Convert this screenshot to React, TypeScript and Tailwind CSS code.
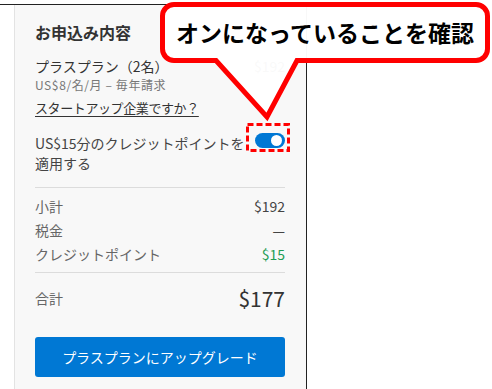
import React from "react";

const font = { fontFamily: '"Noto Sans CJK JP", "Noto Sans", sans-serif' };

function Toggle() {
  return (
    <span className="relative flex h-[15px] w-[30px] shrink-0 items-center rounded-full bg-[#0078d4]">
      <span className="absolute right-[3px] h-[11px] w-[11px] rounded-full bg-white" />
    </span>
  );
}

function Row({ label, value, valueClass }: { label: string; value: string; valueClass?: string }) {
  return (
    <div className="flex items-center justify-between text-[14px] leading-[24px]">
      <span className="text-[#666]">{label}</span>
      <span className={valueClass ?? "text-[#444]"}>{value}</span>
    </div>
  );
}

export default function App() {
  return (
    <div className="relative h-[389px] w-[492px] overflow-hidden bg-white" style={font}>
      {/* screenshot frame */}
      <div className="mt-[4px] flex h-[385px] w-[307px] border-t border-r border-[#222]">
        <div className="w-[14px] shrink-0 bg-white" />
        <div className="flex-1 border-l border-[#e3e3e3] bg-[#f8f8f8] pl-[20px] pr-[21px] pt-[15px]">
          <h2 className="text-[16px] font-bold leading-[24px] text-[#333]">お申込み内容</h2>

          <div className="mt-[12px] flex items-center justify-between text-[14px] leading-[20px] text-[#333]">
            <span>プラスプラン（2名）</span>
            <span className="text-[#444]">$192</span>
          </div>
          <p className="text-[12px] leading-[17px] tracking-[0.6px] text-[#777]">US$8/名/月 – 毎年請求</p>

          <a className="mt-[5px] block text-[13px] leading-[20px] tracking-[-0.4px] text-[#333] underline underline-offset-[3px]">
            スタートアップ企業ですか？
          </a>

          <div className="mt-[15px] flex items-start justify-between">
            <p className="text-[14px] leading-[20px] text-[#444]">
              US$15分のクレジットポイントを
              <br />
              適用する
            </p>
            <div className="flex">
              <Toggle />
            </div>
          </div>

          <div className="mt-[14px] border-t border-[#dcdcdc] pt-[6px] pb-[6px]">
            <Row label="小計" value="$192" />
            <Row label="税金" value="—" />
            <Row label="クレジットポイント" value="$15" valueClass="text-[#1f9d55]" />
          </div>

          <div className="flex items-center justify-between border-t border-[#dcdcdc] pt-[10px]">
            <span className="text-[14px] leading-[30px] text-[#666]">合計</span>
            <span className="text-[21px] leading-[30px] text-[#333]">$177</span>
          </div>

          <button className="mt-[24px] flex h-[40px] w-full items-center justify-center rounded-[3px] bg-[#0078d4] text-[14px] text-white">
            プラスプランにアップグレード
          </button>
        </div>
      </div>

      {/* callout annotation */}
      <svg className="absolute left-0 top-0" width="492" height="389" viewBox="0 0 492 389">
        <path
          d="M174 4.5 H476 A11.5 11.5 0 0 1 487.5 16 V49 A11.5 11.5 0 0 1 476 60.5 H297 L267 117 L216 60.5 H174 A11.5 11.5 0 0 1 162.5 49 V16 A11.5 11.5 0 0 1 174 4.5 Z"
          fill="white"
          fillOpacity="0.97"
          stroke="#ff0000"
          strokeWidth="5"
          strokeLinejoin="miter"
        />
        <rect
          x="247.5"
          y="124.5"
          width="41"
          height="26"
          fill="none"
          stroke="#ff0000"
          strokeWidth="3"
          strokeDasharray="6 3"
        />
      </svg>
      <div className="absolute left-[160px] top-[2px] flex h-[61px] w-[330px] items-center justify-center">
        <span className="text-[23px] font-bold leading-none text-black">オンになっていることを確認</span>
      </div>
    </div>
  );
}
